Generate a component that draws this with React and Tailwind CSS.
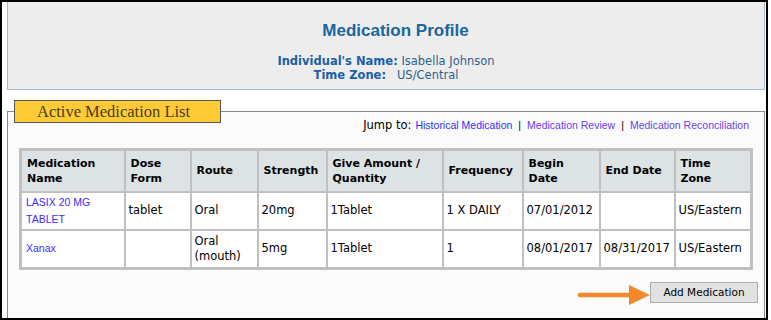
import React from 'react';

const cols = [104, 66, 67, 69, 116, 80, 77, 75, 77];

const headers = [
  ['Medication', 'Name'],
  ['Dose', 'Form'],
  ['Route'],
  ['Strength'],
  ['Give Amount /', 'Quantity'],
  ['Frequency'],
  ['Begin', 'Date'],
  ['End Date'],
  ['Time', 'Zone'],
];

const meds = [
  {
    name: ['LASIX 20 MG', 'TABLET'],
    cells: [['tablet'], ['Oral'], ['20mg'], ['1Tablet'], ['1 X DAILY'], ['07/01/2012'], [''], ['US/Eastern']],
    h: 'h-[38px]',
  },
  {
    name: ['Xanax'],
    cells: [[''], ['Oral', '(mouth)'], ['5mg'], ['1Tablet'], ['1'], ['08/01/2017'], ['08/31/2017'], ['US/Eastern']],
    h: 'h-[39px]',
  },
];

const Lines = ({ lines }) =>
  lines.map((l, i) => (
    <React.Fragment key={i}>
      {i > 0 && <br />}
      {l}
    </React.Fragment>
  ));

const Arrow = () => (
  <svg width="73" height="22" viewBox="0 0 73 22" className="mt-[6px]">
    <line x1="3" y1="11" x2="56" y2="11" stroke="#f28a2b" strokeWidth="4.5" strokeLinecap="round" />
    <polygon points="52,1 73,11 52,21" fill="#f28a2b" />
  </svg>
);

export default function App() {
  return (
    <div className="h-[320px] w-[768px] overflow-hidden border-2 border-black bg-white font-['DejaVu_Sans',sans-serif]">
      <div className="ml-[5px] w-[758px] border-x border-b border-[#a9b8c2] bg-[#ededed] pb-[7px] pt-[19px] text-center">
        <h1 className="pl-[19px] font-['Liberation_Sans',Arial,sans-serif] text-[17px] font-bold leading-[20px] text-[#1a669e]">
          Medication Profile
        </h1>
        <div className="mt-[13px] text-[11.5px] leading-[14px]">
          <div>
            <span className="font-bold text-[#1a5fa8]">Individual's Name:</span>{' '}
            <span className="text-[#2f5f8f]">Isabella Johnson</span>
          </div>
          <div>
            <span className="font-bold text-[#1a5fa8]">Time Zone:</span>
            <span className="text-[#2f5f8f]">{'\u00a0\u00a0\u00a0'}US/Central</span>
          </div>
        </div>
      </div>

      <fieldset className="ml-[5px] mt-[10px] w-[758px] border border-[#8a8a8a] bg-[#fbfbfb] pb-10">
        <legend className="ml-[6px] h-[23px] w-[207px] border border-[#595959] bg-[#fecb37] pl-[22px] font-['Liberation_Serif',Georgia,serif] text-[16.5px] leading-[21px] text-[#4a3b1b]">
          Active Medication List
        </legend>

        <div className="-mt-[5px] flex justify-end pr-[15px] text-[11.5px] leading-[14px] text-black">
          <span>Jump to:</span>
          <div className="ml-[4px] flex items-center font-['Liberation_Sans',Arial,sans-serif] text-[10.5px]">
            <a href="#" className="text-[#2d2dff]">Historical Medication</a>
            <span className="mx-[6px] text-black">|</span>
            <a href="#" className="text-[#6a3cf5]">Medication Review</a>
            <span className="mx-[6px] text-black">|</span>
            <a href="#" className="text-[#6a3cf5]">Medication Reconciliation</a>
          </div>
        </div>

        <table className="ml-[11px] mt-[16px] w-[731px] table-fixed border-collapse border-[3px] border-[#c0c0c0] bg-white text-[11.5px] leading-[15px] text-black">
          <colgroup>
            {cols.map((w, i) => (
              <col key={i} style={{ width: w }} />
            ))}
          </colgroup>
          <thead>
            <tr className="h-[42px] bg-[#dde2e5]">
              {headers.map((h, i) => (
                <th key={i} className="whitespace-nowrap border-2 border-[#c0c0c0] px-[5px] text-left align-middle text-[11px] font-bold">
                  <Lines lines={h} />
                </th>
              ))}
            </tr>
          </thead>
          <tbody>
            {meds.map((m, r) => (
              <tr key={r} className={m.h}>
                <td className="border-2 border-[#c0c0c0] px-[4px] align-middle font-['Liberation_Sans',Arial,sans-serif] text-[10.5px] leading-[17px]">
                  <a href="#" className="text-[#3b2bff]">
                    <Lines lines={m.name} />
                  </a>
                </td>
                {m.cells.map((c, i) => (
                  <td key={i} className="whitespace-nowrap border-2 border-[#c0c0c0] px-[3px] align-middle">
                    <Lines lines={c} />
                  </td>
                ))}
              </tr>
            ))}
          </tbody>
        </table>

        <div className="mt-[8px] flex items-center justify-end pr-[6px]">
          <Arrow />
          <button className="h-[21px] w-[108px] border border-[#adadad] bg-[#e1e1e1] text-[10.5px] leading-[19px] text-black">
            Add Medication
          </button>
        </div>
      </fieldset>
    </div>
  );
}
